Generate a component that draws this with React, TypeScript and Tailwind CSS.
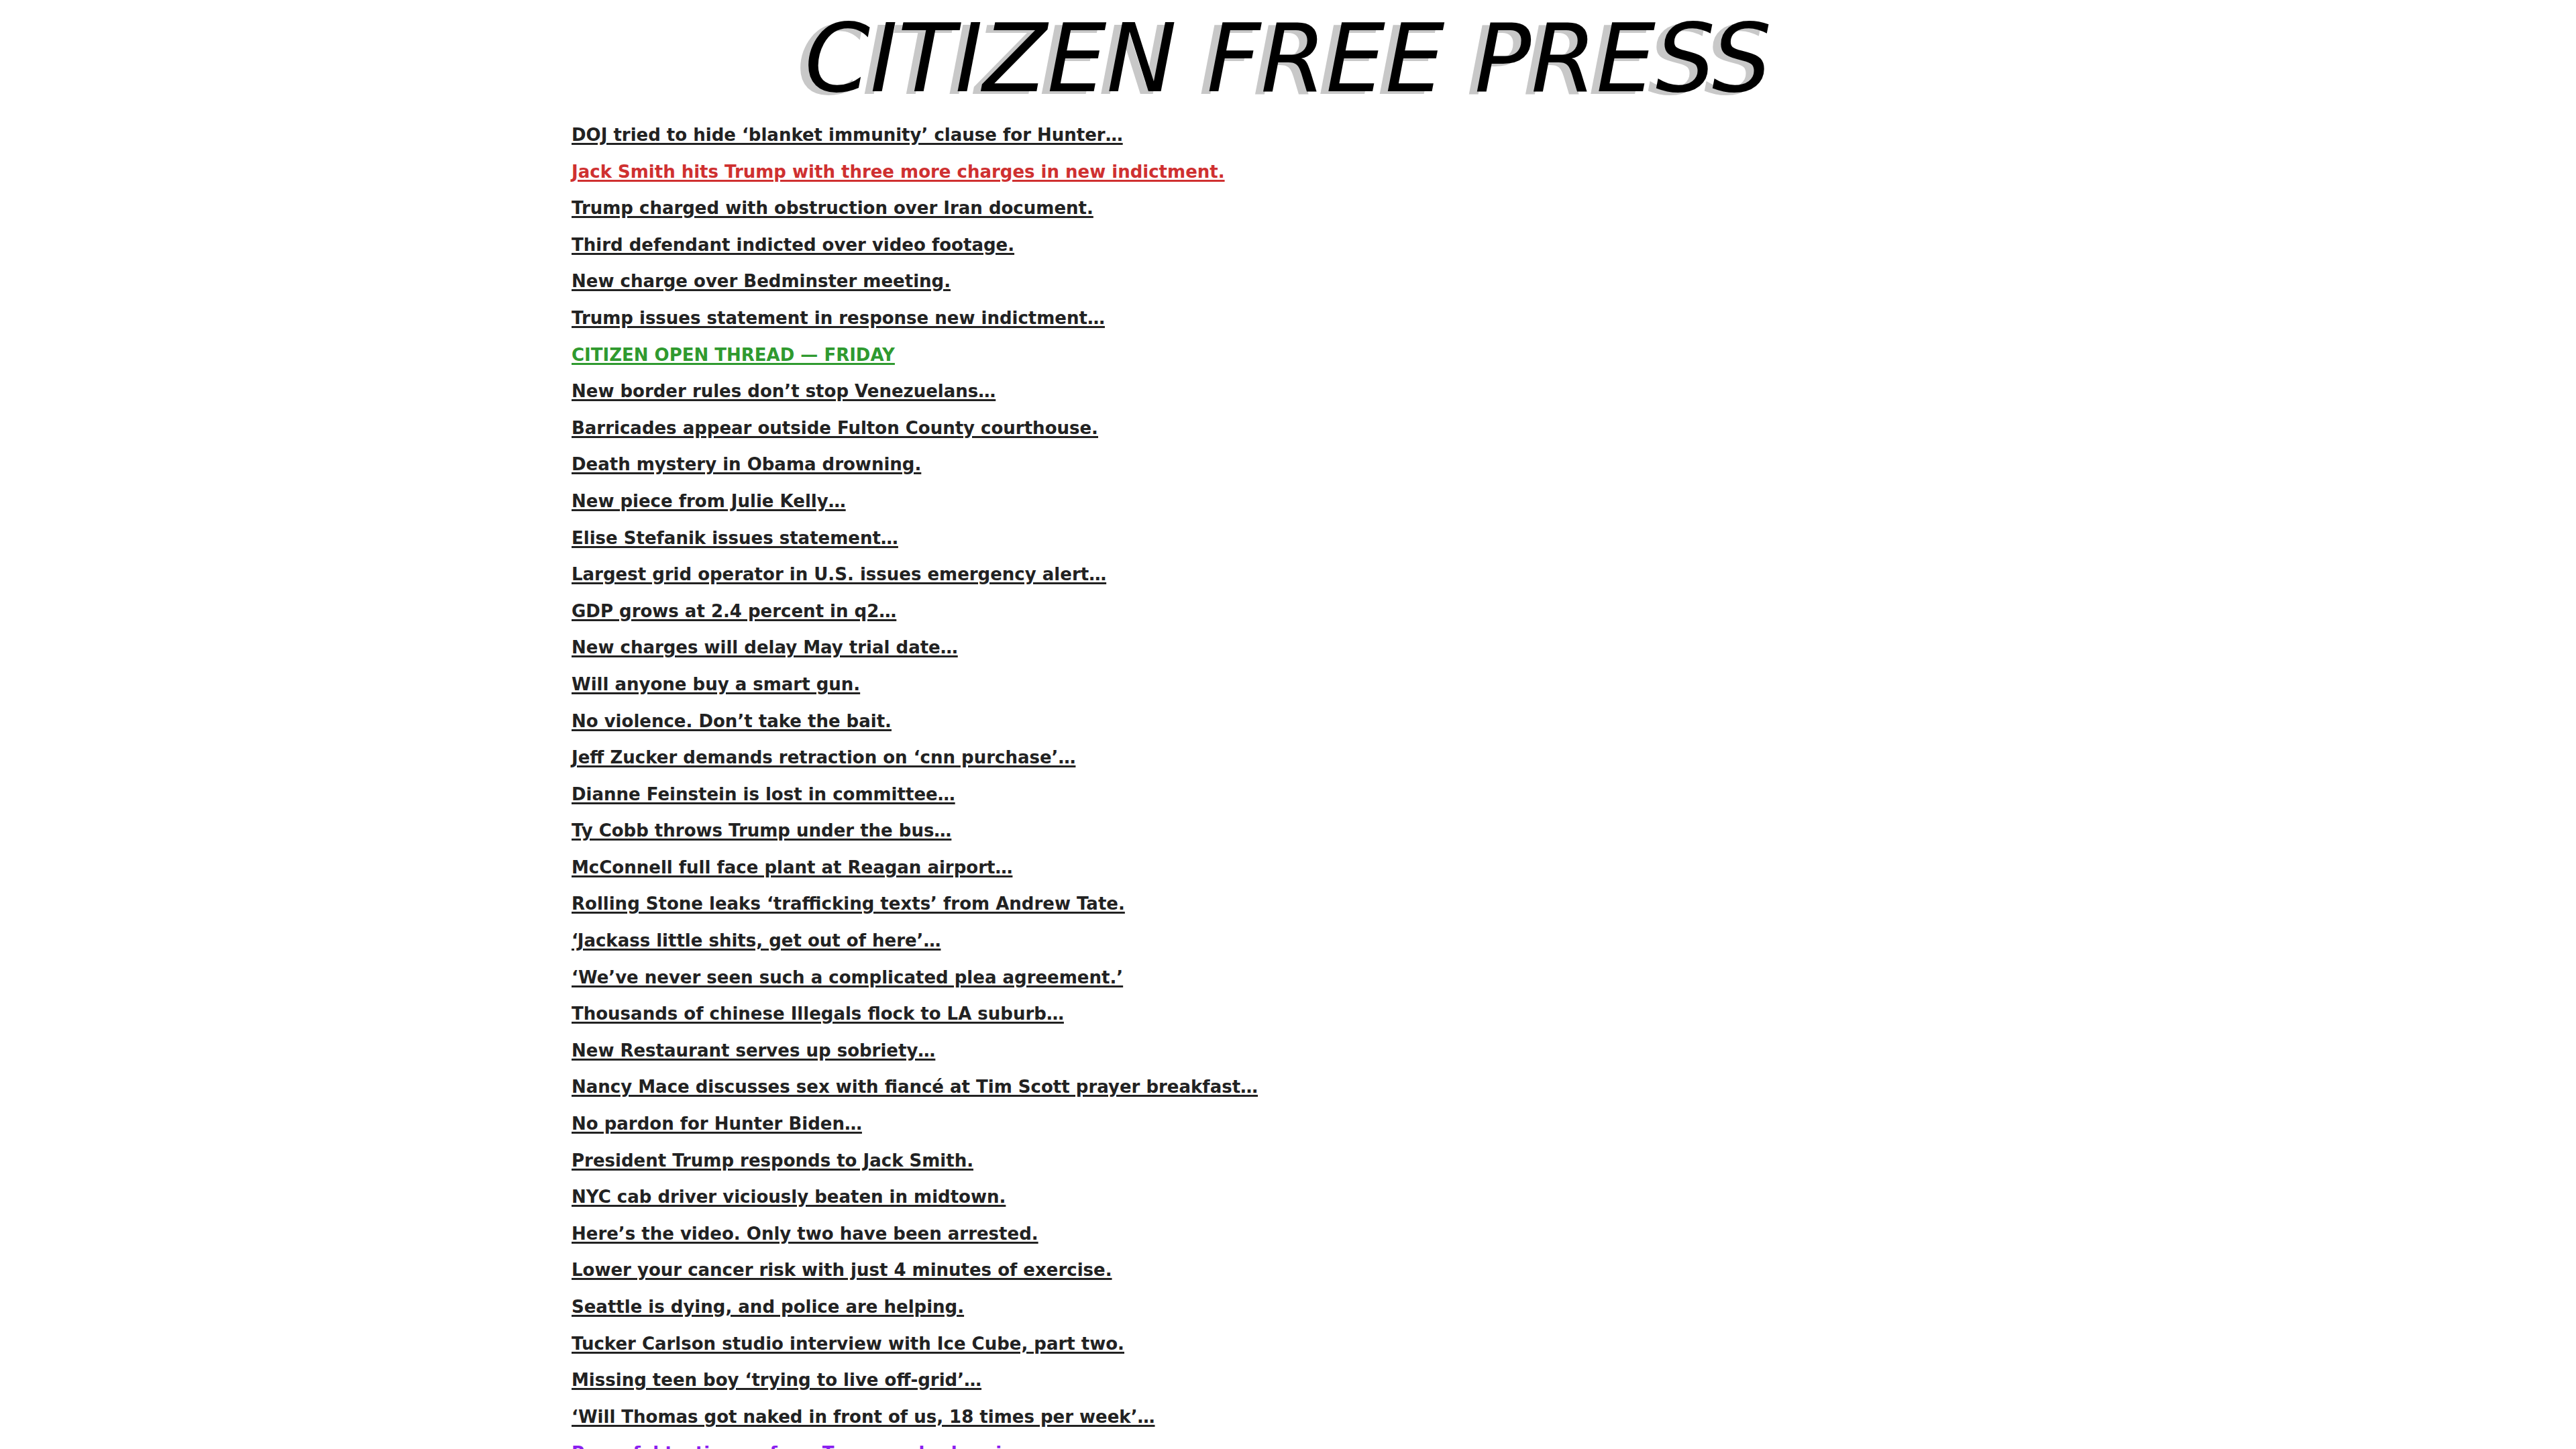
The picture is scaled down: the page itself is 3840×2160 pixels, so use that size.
import React from 'react';

type Headline = {
  text: string;
  tone?: 'red' | 'green' | 'purple';
};

const headlines: Headline[] = [
  { text: 'DOJ tried to hide ‘blanket immunity’ clause for Hunter…' },
  { text: 'Jack Smith hits Trump with three more charges in new indictment.', tone: 'red' },
  { text: 'Trump charged with obstruction over Iran document.' },
  { text: 'Third defendant indicted over video footage.' },
  { text: 'New charge over Bedminster meeting.' },
  { text: 'Trump issues statement in response new indictment…' },
  { text: 'CITIZEN OPEN THREAD — FRIDAY', tone: 'green' },
  { text: 'New border rules don’t stop Venezuelans…' },
  { text: 'Barricades appear outside Fulton County courthouse.' },
  { text: 'Death mystery in Obama drowning.' },
  { text: 'New piece from Julie Kelly…' },
  { text: 'Elise Stefanik issues statement…' },
  { text: 'Largest grid operator in U.S. issues emergency alert…' },
  { text: 'GDP grows at 2.4 percent in q2…' },
  { text: 'New charges will delay May trial date…' },
  { text: 'Will anyone buy a smart gun.' },
  { text: 'No violence. Don’t take the bait.' },
  { text: 'Jeff Zucker demands retraction on ‘cnn purchase’…' },
  { text: 'Dianne Feinstein is lost in committee…' },
  { text: 'Ty Cobb throws Trump under the bus…' },
  { text: 'McConnell full face plant at Reagan airport…' },
  { text: 'Rolling Stone leaks ‘trafficking texts’ from Andrew Tate.' },
  { text: '‘Jackass little shits, get out of here’…' },
  { text: '‘We’ve never seen such a complicated plea agreement.’' },
  { text: 'Thousands of chinese Illegals flock to LA suburb…' },
  { text: 'New Restaurant serves up sobriety…' },
  { text: 'Nancy Mace discusses sex with fiancé at Tim Scott prayer breakfast…' },
  { text: 'No pardon for Hunter Biden…' },
  { text: 'President Trump responds to Jack Smith.' },
  { text: 'NYC cab driver viciously beaten in midtown.' },
  { text: 'Here’s the video. Only two have been arrested.' },
  { text: 'Lower your cancer risk with just 4 minutes of exercise.' },
  { text: 'Seattle is dying, and police are helping.' },
  { text: 'Tucker Carlson studio interview with Ice Cube, part two.' },
  { text: 'Missing teen boy ‘trying to live off-grid’…' },
  { text: '‘Will Thomas got naked in front of us, 18 times per week’…' },
  { text: 'Powerful testimony from Transgender hearing…', tone: 'purple' },
];

function toneClass(tone?: Headline['tone']) {
  if (tone === 'red') return 'text-[#cf3030]';
  if (tone === 'green') return 'text-[#2f9a2f]';
  if (tone === 'purple') return 'text-[#8a1ef0]';
  return 'text-[#222222]';
}

export default function App() {
  return (
    <div className="min-h-screen bg-white font-['DejaVu_Sans',sans-serif]">
      <header className="pt-[18px] text-center">
        <h1 className="text-[140px] leading-none italic font-normal text-black [text-shadow:-12px_4px_0_#c8c8c8]">
          CITIZEN FREE PRESS
        </h1>
      </header>

      <main className="mx-auto mt-[16px] w-[2136px]">
        <ul className="flex flex-col">
          {headlines.map((h, i) => (
            <li key={i} className="text-[26px] leading-[54.6px] font-bold">
              <a
                href="#"
                className={`underline decoration-[3px] underline-offset-[3px] ${toneClass(h.tone)}`}
              >
                {h.text}
              </a>
            </li>
          ))}
        </ul>
      </main>
    </div>
  );
}
